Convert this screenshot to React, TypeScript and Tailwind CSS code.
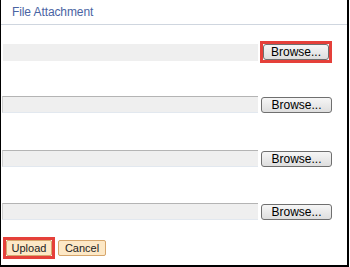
import React from "react";

const font = { fontFamily: '"Liberation Sans", Arial, sans-serif' };

function Browse({ className = "" }: { className?: string }) {
  return (
    <div
      className={`flex items-center justify-center rounded-[3px] border border-[#6f6f6f] bg-gradient-to-b from-[#f6f6f6] to-[#dedede] text-[12px] leading-none text-black ${className}`}
    >
      Browse...
    </div>
  );
}

function Field({ flat = false }: { flat?: boolean }) {
  return (
    <div
      className={
        flat
          ? "h-[17px] w-[255px] bg-[#efefef]"
          : "h-[17px] w-[256px] border-t border-l border-t-[#b4b4b4] border-l-[#d0d0d0] border-b border-b-[#e2e8ef] bg-[#efefef]"
      }
    />
  );
}

export default function App() {
  return (
    <div className="w-[350px] h-[267px] bg-white" style={font}>
      <div className="flex h-[267px] w-[349px] flex-col border-l border-r-2 border-b-2 border-black">
        <div className="flex h-[25px] items-center border-b border-[#cfd6df] pl-[11px] text-[12px] tracking-[-0.1px] text-[#4a64a3]">
          File Attachment
        </div>
        <div className="mt-[16px] flex items-center pl-[2px]">
          <Field flat />
          <div className="ml-[2px] border-[3px] border-[#e5403a] p-0">
            <Browse className="h-[16px] w-[66px]" />
          </div>
        </div>
        <div className="mt-[33px] flex items-center pl-[1px]">
          <Field />
          <Browse className="ml-[3px] h-[16px] w-[71px]" />
        </div>
        <div className="mt-[37px] flex items-center pl-[1px]">
          <Field />
          <Browse className="ml-[3px] h-[16px] w-[71px]" />
        </div>
        <div className="mt-[36px] flex items-center pl-[1px]">
          <Field />
          <Browse className="ml-[3px] h-[16px] w-[71px]" />
        </div>
        <div className="mt-[17px] flex items-center pl-[2px]">
          <div className="border-[3px] border-[#e5403a]">
            <div className="flex h-[16px] w-[46px] items-center justify-center rounded-[2px] border border-[#d6a66c] bg-[#fde8c6] text-[11px] leading-none text-[#222]">
              Upload
            </div>
          </div>
          <div className="ml-[3px] flex h-[16px] w-[48px] items-center justify-center rounded-[2px] border border-[#d6a66c] bg-[#fde8c6] text-[11px] leading-none text-[#222]">
            Cancel
          </div>
        </div>
      </div>
    </div>
  );
}
